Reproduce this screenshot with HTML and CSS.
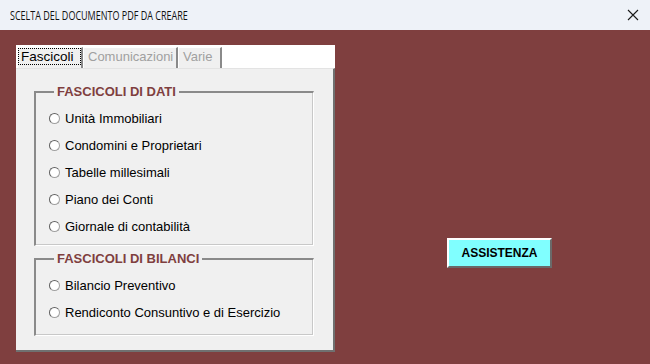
FILE: index.html
```html
<!DOCTYPE html>
<html>
	<head>
		<meta charset="utf-8" />
		<title>Scelta del documento PDF da creare</title>
		<link rel="stylesheet" href="styles.css">
	</head>
	<body>
		<div class="titlebar">
			<span class="title">SCELTA DEL DOCUMENTO PDF DA CREARE</span>
			<svg class="close" width="12" height="12" viewBox="0 0 12 12">
				<path d="M1 1 L11 11 M11 1 L1 11" stroke="#1a1a1a" stroke-width="1.1" fill="none"/>
			</svg>
		</div>
		<div class="main">
			<div class="multipage">
				<div class="tabs">
					<div class="tab active"><span class="focus">Fascicoli</span></div>
					<div class="tab off wide">Comunicazioni</div>
					<div class="tab off">Varie</div>
				</div>
				<div class="page">
					<fieldset class="frame">
						<legend>FASCICOLI DI DATI</legend>
						<label class="opt"><i class="radio"></i>Unità Immobiliari</label>
						<label class="opt"><i class="radio"></i>Condomini e Proprietari</label>
						<label class="opt"><i class="radio"></i>Tabelle millesimali</label>
						<label class="opt"><i class="radio"></i>Piano dei Conti</label>
						<label class="opt"><i class="radio"></i>Giornale di contabilità</label>
					</fieldset>
					<fieldset class="frame small">
						<legend>FASCICOLI DI BILANCI</legend>
						<label class="opt"><i class="radio"></i>Bilancio Preventivo</label>
						<label class="opt"><i class="radio"></i>Rendiconto Consuntivo e di Esercizio</label>
					</fieldset>
				</div>
			</div>
			<button class="help">ASSISTENZA</button>
		</div>
	</body>
</html>
```

FILE: styles.css
```css
* {
	padding: 0px;
	margin: 0px;
	box-sizing: border-box;
}

body {
	width: 650px;
	height: 364px;
	overflow: hidden;
	background-color: #7f3f3f;
	font-family: "Liberation Sans", Arial, sans-serif;
	display: flex;
	flex-direction: column;
}

.titlebar {
	height: 30px;
	background: #eef2f8;
	display: flex;
	align-items: center;
	justify-content: space-between;
	padding: 0 10px 0 10px;
}

.title {
	font-family: "Open Sans", "Noto Sans", sans-serif;
	font-size: 12px;
	color: #111;
	transform: scaleX(0.75);
	transform-origin: left center;
}

.close {
	margin-right: 1px;
}

.main {
	flex: 1;
	display: flex;
	padding: 15px 0 0 16px;
}

.multipage {
	width: 319px;
	height: 307px;
	display: flex;
	flex-direction: column;
	background: #fff;
}

.tabs {
	height: 23px;
	display: flex;
	padding: 2px 0 0 1px;
	background: #fff;
}

.tab {
	font-size: 13px;
	width: 44px;
	height: 21px;
	padding: 0 0 0 4px;
	line-height: 17px;
	white-space: nowrap;
	border-top: 1px solid #fff;
	border-left: 1px solid #fff;
	border-right: 2px solid #8a8a8a;
	background: #f0f0f0;
}

.tab.active {
	width: 66px;
	font-size: 13.5px;
	color: #000;
	padding: 0 0 0 0;
}

.tab.wide {
	width: 95px;
}

.focus {
	display: inline-block;
	width: 63px;
	border: 1px dotted #000;
	padding: 0 0 0 2px;
	line-height: 15px;
}

.tab.off {
	color: #a0a0a0;
}

.page {
	flex: 1;
	background: #f0f0f0;
	border-top: 1px solid #e3e3e3;
	border-right: 2px solid #707070;
	border-bottom: 2px solid #707070;
	padding: 16px 0 0 18px;
}

.frame {
	width: 280px;
	height: 161px;
	border-top: 2px solid #8a8a8a;
	border-left: 2px solid #8a8a8a;
	border-right: 1px solid #fff;
	border-bottom: 1px solid #fff;
	box-shadow: inset -1px -1px 0 #c8c8c8;
	padding: 11px 0 0 13px;
	display: flex;
	flex-direction: column;
	gap: 11px;
}

.frame.small {
	height: 84px;
	margin-top: 6px;
}

legend {
	margin-left: 5px;
	padding: 0 3px 0 3px;
	font-size: 13px;
	font-weight: bold;
	color: #7f3f3f;
	line-height: 14px;
}

.opt {
	font-size: 13px;
	color: #000;
	display: flex;
	align-items: center;
	height: 16px;
}

.radio {
	width: 11px;
	height: 11px;
	border-radius: 50%;
	background: #fff;
	border: 1px solid #a0a0a0;
	border-top-color: #606060;
	border-left-color: #606060;
	margin-right: 5px;
}

.help {
	margin: 193px 0 0 112px;
	width: 105px;
	height: 30px;
	background: #80ffff;
	font-family: "Liberation Sans", Arial, sans-serif;
	font-size: 12px;
	font-weight: bold;
	color: #000;
	border-top: 2px solid #fff;
	border-left: 2px solid #fff;
	border-right: 2px solid #6a6a6a;
	border-bottom: 2px solid #6a6a6a;
}
```
